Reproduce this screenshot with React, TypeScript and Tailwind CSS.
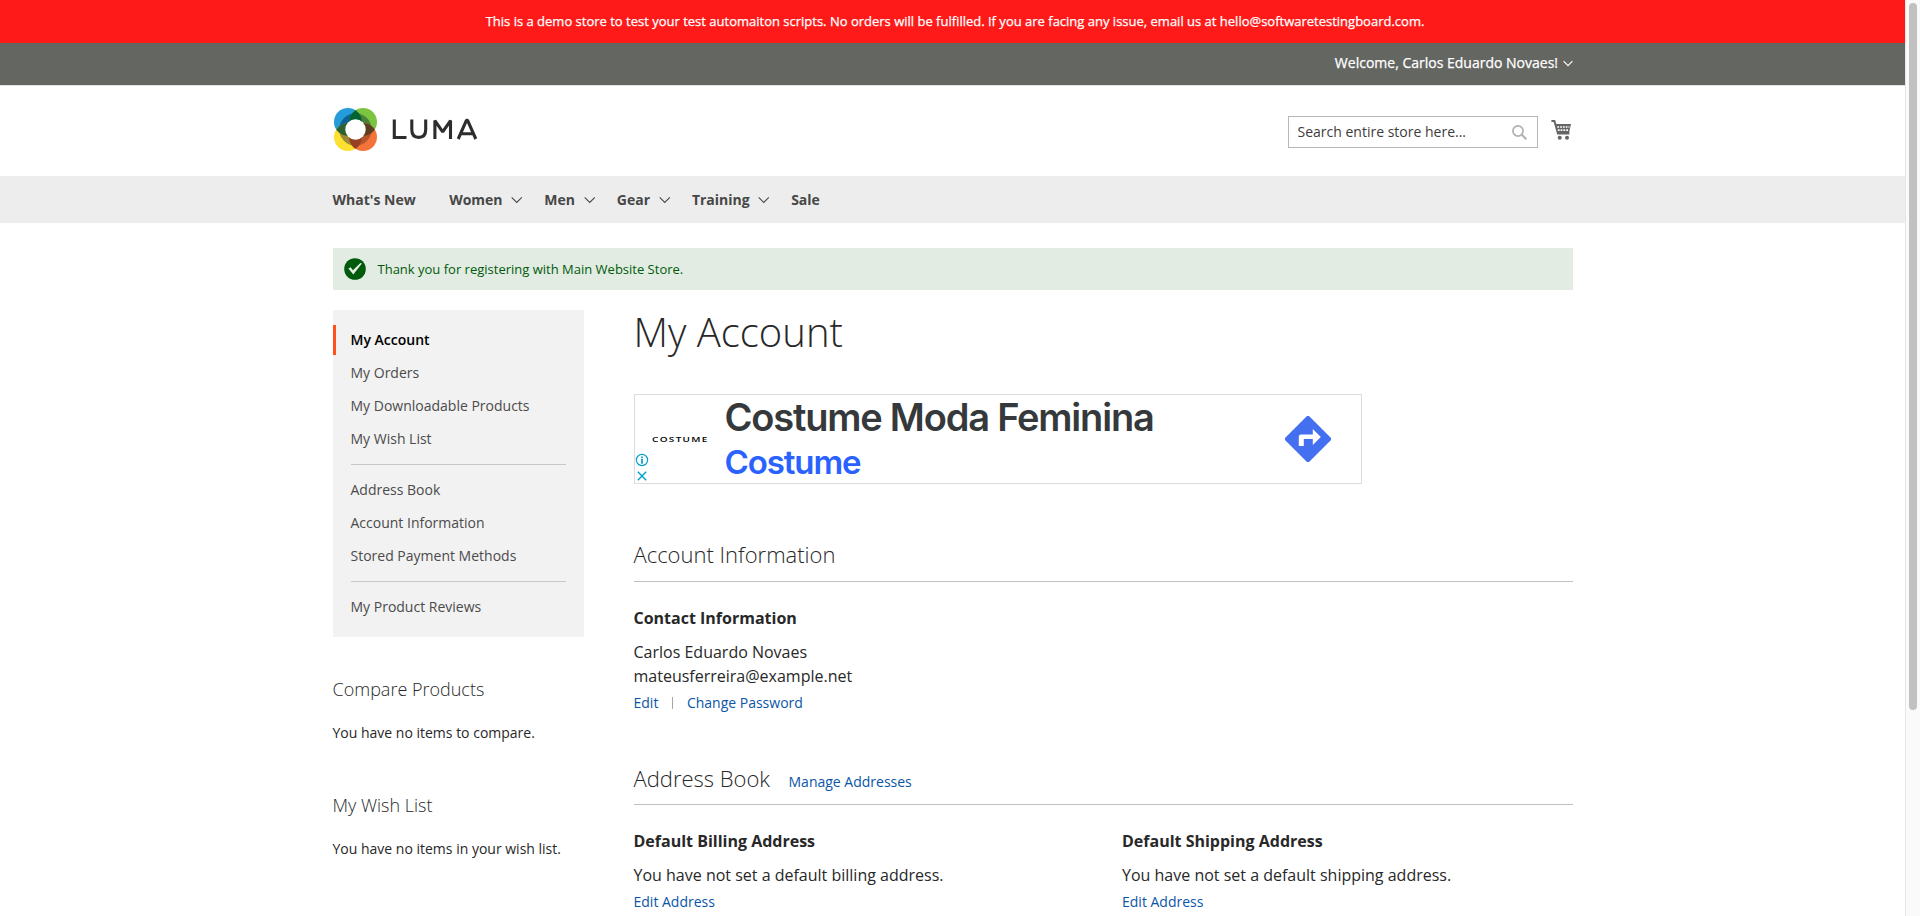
import React from "react";

const Chevron = ({ className, w = 1.1 }: { className: string; w?: number }) => (
  <svg viewBox="0 0 12 8" className={className} fill="none" stroke="currentColor" strokeWidth={w}>
    <path d="M.7 1.2 6 6.6l5.3-5.4" />
  </svg>
);

const Logo = () => (
  <svg viewBox="0 0 148 44" className="h-11 w-[148px]">
    <defs>
      <clipPath id="tl"><circle cx="13.9" cy="13.9" r="13.9" /></clipPath>
      <clipPath id="tr"><circle cx="29.1" cy="13.9" r="13.9" /></clipPath>
      <clipPath id="bl"><circle cx="13.9" cy="29.1" r="13.9" /></clipPath>
      <clipPath id="br"><circle cx="29.1" cy="29.1" r="13.9" /></clipPath>
    </defs>
    <circle cx="13.9" cy="13.9" r="13.9" fill="#259cda" />
    <circle cx="29.1" cy="13.9" r="13.9" fill="#7cc540" />
    <circle cx="13.9" cy="29.1" r="13.9" fill="#fee031" />
    <circle cx="29.1" cy="29.1" r="13.9" fill="#f4733a" />
    <g clipPath="url(#tl)"><circle cx="21.5" cy="21.5" r="16.2" fill="#0b6394" /></g>
    <g clipPath="url(#tr)"><circle cx="21.5" cy="21.5" r="16.2" fill="#4b8239" /></g>
    <g clipPath="url(#bl)"><circle cx="21.5" cy="21.5" r="16.2" fill="#9b8936" /></g>
    <g clipPath="url(#br)"><circle cx="21.5" cy="21.5" r="16.2" fill="#b5552d" /></g>
    <g clipPath="url(#tl)"><circle cx="29.1" cy="13.9" r="13.9" fill="#006332" /></g>
    <g clipPath="url(#tl)"><circle cx="13.9" cy="29.1" r="13.9" fill="#2d6032" /></g>
    <g clipPath="url(#tr)"><circle cx="29.1" cy="29.1" r="13.9" fill="#5a4020" /></g>
    <g clipPath="url(#bl)"><circle cx="29.1" cy="29.1" r="13.9" fill="#963f22" /></g>
    <circle cx="21.5" cy="21.5" r="10.2" fill="#fff" />
    <g fill="none" stroke="#2d2d2d" strokeWidth="3.1" strokeLinejoin="bevel">
      <path d="M60.3 11.5v18h12.2" strokeLinejoin="miter" />
      <path d="M77.8 11.5v10.3c0 5.2 2.4 7.6 6.9 7.6s7-2.4 7-7.6V11.5" />
      <path d="M100.9 31V12.6l7.8 11.2 7.8-11.2V31" />
      <path d="m124.2 31 8.2-18.6h1.2l8.2 18.6M127.6 25.8h10.8" />
    </g>
  </svg>
);

const Cart = () => (
  <svg viewBox="0 0 20 22" className="h-[22px] w-5">
    <g fill="none" stroke="#666" strokeWidth="2">
      <path d="M.4 1.9h3L7 14.6h11.4" />
    </g>
    <path d="M4 5h16l-2 9.3H6.8z" fill="#666" />
    <path d="M6.3 8h12.2M6.8 11.2h11.4" stroke="#fff" strokeWidth="1.7" strokeDasharray="1.8 1" />
    <circle cx="8.7" cy="18.8" r="2" fill="#666" />
    <circle cx="16" cy="18.8" r="2" fill="#666" />
  </svg>
);

const groups = [
  ["My Orders", "My Downloadable Products", "My Wish List"],
  ["Address Book", "Account Information", "Stored Payment Methods"],
  ["My Product Reviews"],
];

const NavItem = ({ label, className }: { label: string; className: string }) => (
  <a className={`flex items-center ${className}`}>
    {label}
    <Chevron className="ml-[8.5px] mt-px h-2 w-[11.5px]" />
  </a>
);

const AddressCard = ({ kind, label }: { kind: string; label: string }) => (
  <div>
    <h3 className="text-base leading-[18px] font-bold">Default {label} Address</h3>
    <p className="mt-[13px] text-base leading-6">You have not set a default {kind} address.</p>
    <a className="mt-[5px] block text-sm leading-5 text-[#0a55a8]">Edit Address</a>
  </div>
);

export default function App() {
  return (
    <div className="flex h-[916px] w-[1920px] overflow-hidden bg-white font-['Open_Sans',sans-serif] text-sm text-[#282828]">
      <div className="w-[1905px] shrink-0">
        <div className="flex h-[43px] items-center justify-center bg-[#ff1a1a] pl-[5px] text-[13px] text-white [-webkit-text-stroke:0.25px_white]">
          <p className="-mt-px">
            This is a demo store to test your test automaiton scripts. No orders will be fulfilled. If you are facing any issue, email us at hello@softwaretestingboard.com.
          </p>
        </div>
        <div className="h-[43px] border-b border-[#e0e0e0] bg-[#646662] text-white">
          <div className="mx-auto flex h-10 w-[1240px] items-center justify-end">
            <span className="[-webkit-text-stroke:0.25px_white]">Welcome, Carlos Eduardo Novaes!</span>
            <Chevron className="ml-[4.5px] h-[7px] w-[10px]" w={1.3} />
          </div>
        </div>
        <header className="mx-auto flex h-[90px] w-[1240px] items-start">
          <div className="mt-[22px] ml-[1.5px]"><Logo /></div>
          <div className="mt-[30px] ml-auto flex h-8 w-[250px] items-center justify-between border border-[#b8b8b8] pr-[10px] pl-[9px]">
            <span className="text-[#3c3c3c]">Search entire store here...</span>
            <svg viewBox="0 0 16 16" className="h-[15px] w-[15px]" fill="none" stroke="#b0b0b0" strokeWidth="1.8">
              <circle cx="6.4" cy="6.4" r="5.4" />
              <path d="m10.2 10.2 5 5" strokeWidth="2.2" />
            </svg>
          </div>
          <div className="mt-[33px] mr-[1.5px] ml-[13.5px]"><Cart /></div>
        </header>
        <nav className="h-[47px] bg-[#ededed]">
          <div className="mx-auto flex h-[47px] w-[1240px] items-center font-bold text-[#474747]">
            <a>What's New</a>
            <NavItem label="Women" className="ml-[33.4px]" />
            <NavItem label="Men" className="ml-[21.8px]" />
            <NavItem label="Gear" className="ml-[21.8px]" />
            <NavItem label="Training" className="ml-[21.8px]" />
            <a className="ml-[21.5px]">Sale</a>
          </div>
        </nav>

        <div className="mx-auto w-[1240px]">
          <div className="mt-[25px] flex h-[42px] items-center bg-[#e2ece2] pl-[11px] text-[13px] text-[#005a0c]">
            <svg viewBox="0 0 22 22" className="mr-3 h-[22px] w-[22px]">
              <circle cx="11" cy="11" r="10.8" fill="#005a0c" />
              <path d="m4.4 10.6 2.2-1.4 2.3 3L16.4 5l1.5.6-8.6 10.8z" fill="#e2ece2" />
            </svg>
            Thank you for registering with Main Website Store.
          </div>
          <div className="mt-5 flex">
            <aside className="w-[251px] shrink-0">
              <div className="h-[327px] bg-[#f2f2f2] pt-[15px] text-[#4b4b4b]">
                <div className="mb-px flex h-[30px] items-center border-l-[3px] border-[#ff501d] pl-[15px] font-semibold text-black">My Account</div>
                {groups.map((items, i) => (
                  <div key={i} className={i ? "mx-[18px] mt-[9px] border-t border-[#c8c8c8] pt-[8px]" : "mx-[18px]"}>
                    {items.map((t) => (
                      <div key={t} className="flex h-[33px] items-center">{t}</div>
                    ))}
                  </div>
                ))}
              </div>
              <h2 className="mt-[40px] text-lg leading-6 font-light">Compare Products</h2>
              <p className="mt-[22px] leading-5">You have no items to compare.</p>
              <h2 className="mt-[50px] text-lg leading-6 font-light">My Wish List</h2>
              <p className="mt-[22px] leading-5">You have no items in your wish list.</p>
            </aside>
            <main className="ml-[50px] w-[939px]">
              <h1 className="text-[40px] leading-[44px] font-light">My Account</h1>
              <section className="mt-10 flex h-[90px] w-[728px] border border-[#dcdcdc]">
                <div className="flex w-[90px] flex-col">
                  <div className="mt-[38px] ml-[17px] h-3 origin-left scale-x-[1.33] text-[7.5px] leading-3 font-semibold tracking-[1px] text-black">COSTUME</div>
                  <svg viewBox="0 0 14 30" className="mt-[8px] ml-[0.5px] h-[30px] w-[14px]" fill="none" stroke="#00a0c8" strokeWidth="1.2">
                    <circle cx="7" cy="7" r="5.6" />
                    <path d="M7 3.6v1.6M7 6.1v4.6" strokeWidth="1.7" />
                    <path d="m2.8 18.8 8.4 8.4m0-8.4-8.4 8.4" strokeWidth="1.4" />
                  </svg>
                </div>
                <div className="font-['Inter',sans-serif] font-semibold">
                  <div className="-mt-px text-[38px] leading-[46px] tracking-[-1.2px] text-[#35393c]">Costume Moda Feminina</div>
                  <div className="text-[33px] leading-[44px] tracking-[-1.1px] text-[#2962ff]">Costume</div>
                </div>
                <svg viewBox="0 0 46 46" className="mt-[21px] mr-[29.5px] ml-auto h-[46px] w-[46px]">
                  <path d="M21.5.6a2 2 0 0 1 3 0l21 21a2 2 0 0 1 0 3l-21 21a2 2 0 0 1-3 0l-21-21a2 2 0 0 1 0-3z" fill="#446ff0" />
                  <path d="M13.8 30v-9.2q0-2.2 2.2-2.2h11.8v-5.5l8 7.8-8 8V23h-9v7z" fill="#fff" />
                </svg>
              </section>
              <h2 className="mt-[54px] flex h-[44px] items-start border-b border-[#c1c1c1] text-[22px] leading-8 font-light">Account Information</h2>
              <h3 className="mt-[27px] text-base leading-[18px] font-bold">Contact Information</h3>
              <p className="mt-[13px] text-base leading-6">Carlos Eduardo Novaes<br />mateusferreira@example.net</p>
              <div className="mt-[5px] flex items-center leading-5 text-[#0a55a8]">
                <a>Edit</a>
                <i className="mr-[14px] ml-[13.5px] h-3 w-px bg-[#a6a6a6]" />
                <a>Change Password</a>
              </div>
              <div className="mt-[49px] flex h-[43px] items-baseline border-b border-[#c1c1c1]">
                <h2 className="text-[22px] leading-8 font-light">Address Book</h2>
                <a className="ml-[18.5px] text-[#0a55a8]">Manage Addresses</a>
              </div>
              <div className="mt-[27px] grid grid-cols-2">
                <AddressCard kind="billing" label="Billing" />
                <div className="pl-[19px]"><AddressCard kind="shipping" label="Shipping" /></div>
              </div>
            </main>
          </div>
        </div>
      </div>
      <div className="w-[15px] shrink-0 border-l border-[#e6e6e6] bg-[#fafafa] pt-[3px] pl-[3px]">
        <div className="h-[707px] w-2 rounded-full bg-[#c1c1c1]" />
      </div>
    </div>
  );
}
